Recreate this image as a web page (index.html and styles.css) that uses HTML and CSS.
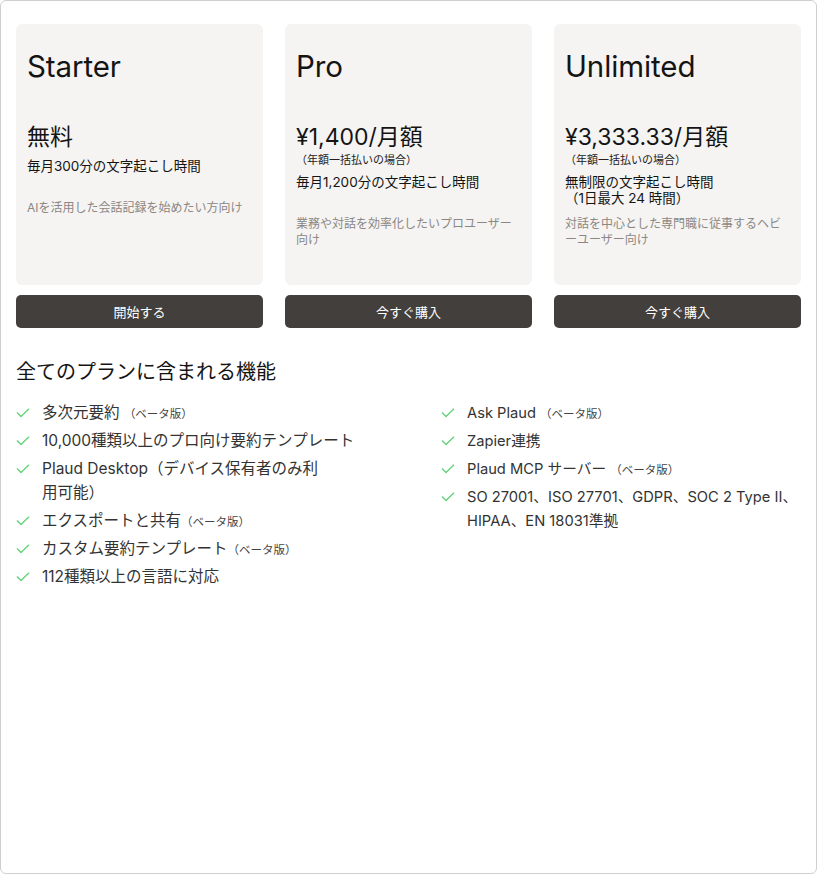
FILE: index.html
```html
<!DOCTYPE html>
<html lang="ja">
<head>
<meta charset="utf-8">
<title>Plaud プラン</title>
<link rel="stylesheet" href="styles.css">
</head>
<body>
<div class="frame">
  <div class="plans">
    <div class="plan">
      <div class="card">
        <h2 class="name">Starter</h2>
        <div class="price">無料</div>
        <div class="hours">毎月300分の文字起こし時間</div>
        <p class="desc">AIを活用した会話記録を始めたい方向け</p>
      </div>
      <button class="btn">開始する</button>
    </div>
    <div class="plan">
      <div class="card">
        <h2 class="name">Pro</h2>
        <div class="price">¥1,400/月額</div>
        <div class="note">（年額一括払いの場合）</div>
        <div class="hours">毎月1,200分の文字起こし時間</div>
        <p class="desc">業務や対話を効率化したいプロユーザー向け</p>
      </div>
      <button class="btn">今すぐ購入</button>
    </div>
    <div class="plan">
      <div class="card">
        <h2 class="name">Unlimited</h2>
        <div class="price">¥3,333.33/月額</div>
        <div class="note">（年額一括払いの場合）</div>
        <div class="hours">無制限の文字起こし時間<br>（1日最大 24 時間）</div>
        <p class="desc">対話を中心とした専門職に従事するヘビーユーザー向け</p>
      </div>
      <button class="btn">今すぐ購入</button>
    </div>
  </div>

  <h3 class="features-title">全てのプランに含まれる機能</h3>
  <div class="features">
    <ul class="list list-left">
      <li><svg class="check" viewBox="0 0 14 10"><path d="M1 4.5 L5 8.5 L13 0.8"/></svg><span>多次元要約 <small>（ベータ版）</small></span></li>
      <li><svg class="check" viewBox="0 0 14 10"><path d="M1 4.5 L5 8.5 L13 0.8"/></svg><span>10,000種類以上のプロ向け要約テンプレート</span></li>
      <li><svg class="check" viewBox="0 0 14 10"><path d="M1 4.5 L5 8.5 L13 0.8"/></svg><span>Plaud Desktop（デバイス保有者のみ利<br>用可能）</span></li>
      <li><svg class="check" viewBox="0 0 14 10"><path d="M1 4.5 L5 8.5 L13 0.8"/></svg><span>エクスポートと共有<small>（ベータ版）</small></span></li>
      <li><svg class="check" viewBox="0 0 14 10"><path d="M1 4.5 L5 8.5 L13 0.8"/></svg><span>カスタム要約テンプレート<small>（ベータ版）</small></span></li>
      <li><svg class="check" viewBox="0 0 14 10"><path d="M1 4.5 L5 8.5 L13 0.8"/></svg><span>112種類以上の言語に対応</span></li>
    </ul>
    <ul class="list list-right">
      <li><svg class="check" viewBox="0 0 14 10"><path d="M1 4.5 L5 8.5 L13 0.8"/></svg><span>Ask Plaud <small>（ベータ版）</small></span></li>
      <li><svg class="check" viewBox="0 0 14 10"><path d="M1 4.5 L5 8.5 L13 0.8"/></svg><span>Zapier連携</span></li>
      <li><svg class="check" viewBox="0 0 14 10"><path d="M1 4.5 L5 8.5 L13 0.8"/></svg><span>Plaud MCP サーバー <small>（ベータ版）</small></span></li>
      <li><svg class="check" viewBox="0 0 14 10"><path d="M1 4.5 L5 8.5 L13 0.8"/></svg><span>SO 27001、ISO 27701、GDPR、SOC 2 Type II、HIPAA、EN 18031準拠</span></li>
    </ul>
  </div>
</div>
</body>
</html>
```

FILE: styles.css
```css
* { box-sizing: border-box; }

html, body {
  margin: 0;
  padding: 0;
  background: #ffffff;
}

body {
  font-family: "Inter", "Noto Sans CJK JP", sans-serif;
  color: #1a1a1a;
}

.frame {
  width: 817px;
  height: 874px;
  border: 1px solid #cfcfcf;
  border-radius: 6px;
  padding: 23px 15px 0 15px;
  background: #fff;
}

.plans {
  display: grid;
  grid-template-columns: repeat(3, 247px);
  column-gap: 22px;
}

.plan {
  display: flex;
  flex-direction: column;
}

.card {
  background: #f5f4f2;
  border-radius: 6px;
  height: 261px;
  padding: 24px 11px 0 11px;
}

.name {
  margin: 0;
  font-weight: 400;
  font-size: 29.5px;
  line-height: 36px;
  letter-spacing: -0.1px;
  color: #141414;
}

.price {
  margin-top: 38px;
  font-size: 23px;
  line-height: 30px;
  color: #141414;
}

.note {
  font-size: 11px;
  line-height: 16px;
  color: #222;
}

.hours {
  margin-top: 6px;
  min-height: 32px;
  font-size: 13.5px;
  line-height: 16px;
  color: #141414;
}

.desc {
  margin: 10px 0 0 0;
  font-size: 12px;
  line-height: 16px;
  color: #8a8784;
}

.btn {
  margin-top: 10px;
  height: 33px;
  border: none;
  border-radius: 5px;
  background: #433f3c;
  color: #ffffff;
  font-family: inherit;
  font-size: 13px;
  cursor: pointer;
}

.features-title {
  margin: 30px 0 0 0;
  font-weight: 400;
  font-size: 20px;
  line-height: 28px;
  color: #141414;
}

.features {
  display: grid;
  grid-template-columns: 346px 361px;
  column-gap: 79px;
  margin-top: 15px;
}

.list {
  list-style: none;
  margin: 0;
  padding: 0;
  display: flex;
  flex-direction: column;
  gap: 4px;
}

.list li {
  display: flex;
  align-items: flex-start;
  font-size: 15.5px;
  line-height: 24px;
  color: #333;
}

.list-right li {
  font-size: 14.7px;
}

.list small {
  font-size: 11.5px;
  line-height: 1;
  color: #444;
}

.check {
  flex: none;
  width: 14px;
  height: 10px;
  margin: 7px 12px 0 0;
  fill: none;
  stroke: #66d37c;
  stroke-width: 1.4;
}
```
